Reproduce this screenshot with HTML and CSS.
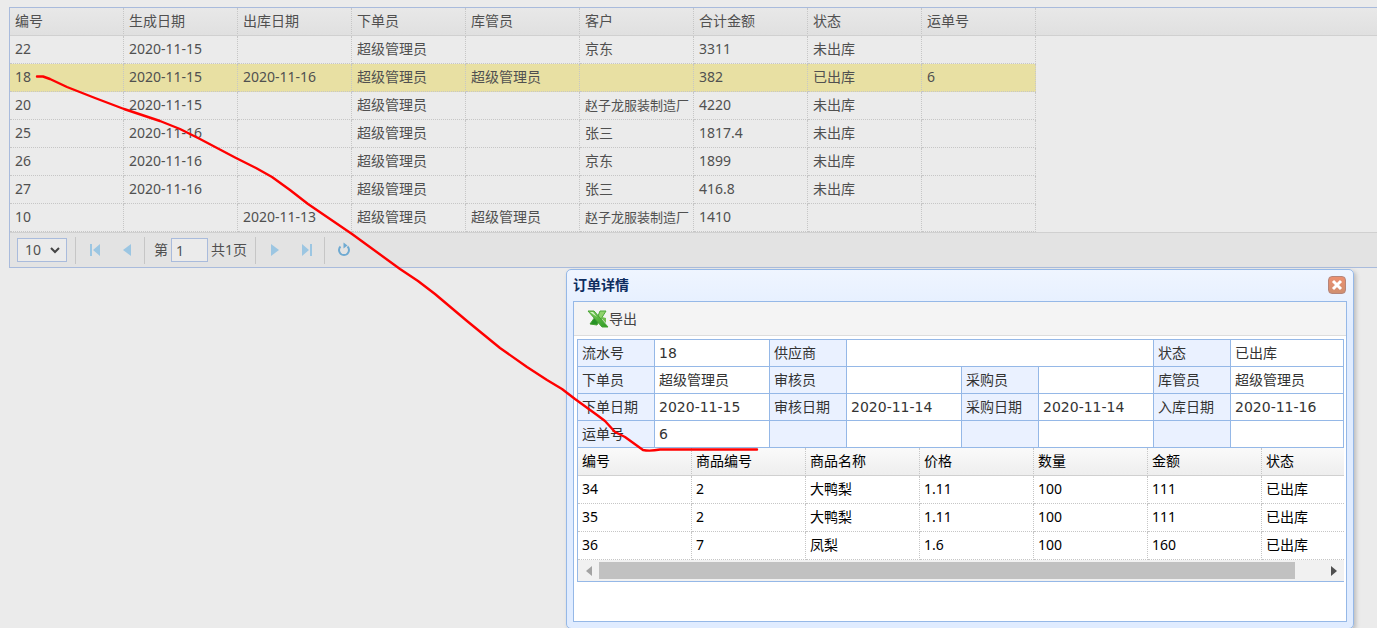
FILE: index.html
```html
<!DOCTYPE html>
<html lang="zh-CN">
<head>
<meta charset="utf-8">
<title>订单</title>
<link rel="stylesheet" href="styles.css">
</head>
<body>
<main class="grid">
  <div class="grid-view">
    <table class="data">
      <thead><tr><th>编号</th><th>生成日期</th><th>出库日期</th><th>下单员</th><th>库管员</th><th>客户</th><th>合计金额</th><th>状态</th><th>运单号</th></tr></thead>
      <tbody>
        <tr><td>22</td><td>2020-11-15</td><td></td><td>超级管理员</td><td></td><td>京东</td><td>3311</td><td>未出库</td><td></td></tr>
        <tr class="selected"><td>18</td><td>2020-11-15</td><td>2020-11-16</td><td>超级管理员</td><td>超级管理员</td><td></td><td>382</td><td>已出库</td><td>6</td></tr>
        <tr><td>20</td><td>2020-11-15</td><td></td><td>超级管理员</td><td></td><td class="long">赵子龙服装制造厂</td><td>4220</td><td>未出库</td><td></td></tr>
        <tr><td>25</td><td>2020-11-16</td><td></td><td>超级管理员</td><td></td><td>张三</td><td>1817.4</td><td>未出库</td><td></td></tr>
        <tr><td>26</td><td>2020-11-16</td><td></td><td>超级管理员</td><td></td><td>京东</td><td>1899</td><td>未出库</td><td></td></tr>
        <tr><td>27</td><td>2020-11-16</td><td></td><td>超级管理员</td><td></td><td>张三</td><td>416.8</td><td>未出库</td><td></td></tr>
        <tr><td>10</td><td></td><td>2020-11-13</td><td>超级管理员</td><td>超级管理员</td><td class="long">赵子龙服装制造厂</td><td>1410</td><td></td><td></td></tr>
      </tbody>
    </table>
  </div>
  <nav class="pager" aria-label="分页">
    <span class="size-wrap">
      <select class="size" aria-label="每页条数"><option>10</option></select>
      <svg class="chevron" viewBox="0 0 10 6" aria-hidden="true"><path d="M1 1l4 4 4-4"/></svg>
    </span>
    <span class="sep"></span>
    <button class="nav" type="button" aria-label="首页"><svg viewBox="0 0 16 16"><path d="M3 2h2v12H3zM13 2v12L6 8z"/></svg></button>
    <button class="nav" type="button" aria-label="上一页"><svg viewBox="0 0 16 16"><path d="M12 2v12L4 8z"/></svg></button>
    <span class="sep"></span>
    <label class="page">第<input type="text" value="1"></label>
    <span class="total">共1页</span>
    <span class="sep"></span>
    <button class="nav" type="button" aria-label="下一页"><svg viewBox="0 0 16 16"><path d="M4 2v12l8-6z"/></svg></button>
    <button class="nav" type="button" aria-label="末页"><svg viewBox="0 0 16 16"><path d="M3 2v12l7-6zM11 2h2v12h-2z"/></svg></button>
    <span class="sep"></span>
    <button class="nav" type="button" aria-label="刷新"><svg viewBox="0 0 16 16"><path class="ring" d="M4.500 4.500A5 5 0 1 0 11.500 4.500"/><path class="tip" d="M7.500 .5v6l4-3z"/></svg></button>
  </nav>
</main>

<section class="dialog" role="dialog" aria-labelledby="dialog-title">
  <header class="dialog-head">
    <h1 id="dialog-title">订单详情</h1>
    <button class="close" type="button" aria-label="关闭"><svg viewBox="0 0 16 16"><path d="M4 4l8 8M12 4l-8 8"/></svg></button>
  </header>
  <div class="dialog-body">
    <div class="toolbar">
      <button class="export" type="button">
        <svg viewBox="0 0 22 20" aria-hidden="true">
          <defs><linearGradient id="leaf" x1="0" y1="0" x2="1" y2="1"><stop offset="0" stop-color="#7fd05c"/><stop offset="1" stop-color="#2d9a22"/></linearGradient></defs>
          <path d="M13 2h6l-5 8-3-3z" fill="#8fd36c" stroke="#4fa83c"/>
          <path d="M3 15l5-7 4 4-2 4z" fill="#279326" stroke="#43a12f"/>
          <path d="M15 8l4 1v5l-4-4z" fill="#6fbd4d"/>
          <path d="M1 2h6l14 16h-6z" fill="url(#leaf)" stroke="#48a235"/>
          <path d="M3 3h3l4 5z" fill="#d6f3c8"/>
        </svg><span>导出</span>
      </button>
    </div>
    <div class="content">
      <table class="form">
        <colgroup><col class="k"><col class="v"><col class="k"><col class="v"><col class="k"><col class="v"><col class="k"><col></colgroup>
        <tbody>
          <tr><th>流水号</th><td>18</td><th>供应商</th><td colspan="3"></td><th>状态</th><td>已出库</td></tr>
          <tr><th>下单员</th><td>超级管理员</td><th>审核员</th><td></td><th>采购员</th><td></td><th>库管员</th><td>超级管理员</td></tr>
          <tr><th>下单日期</th><td>2020-11-15</td><th>审核日期</th><td>2020-11-14</td><th>采购日期</th><td>2020-11-14</td><th>入库日期</th><td>2020-11-16</td></tr>
          <tr><th>运单号</th><td>6</td><th></th><td></td><th></th><td></td><th></th><td></td></tr>
        </tbody>
      </table>
      <div class="items">
        <table class="data">
          <thead><tr><th>编号</th><th>商品编号</th><th>商品名称</th><th>价格</th><th>数量</th><th>金额</th><th>状态</th></tr></thead>
          <tbody>
            <tr><td>34</td><td>2</td><td>大鸭梨</td><td>1.11</td><td>100</td><td>111</td><td>已出库</td></tr>
            <tr><td>35</td><td>2</td><td>大鸭梨</td><td>1.11</td><td>100</td><td>111</td><td>已出库</td></tr>
            <tr><td>36</td><td>7</td><td>凤梨</td><td>1.6</td><td>100</td><td>160</td><td>已出库</td></tr>
          </tbody>
        </table>
        <div class="scrollbar">
          <svg class="arrow" viewBox="0 0 6 10" aria-hidden="true"><path d="M6 0v10L0 5z" fill="#a3a3a3"/></svg>
          <div class="track"><div class="thumb"></div></div>
          <svg class="arrow" viewBox="0 0 6 10" aria-hidden="true"><path d="M0 0v10l6-5z" fill="#505050"/></svg>
        </div>
      </div>
    </div>
  </div>
</section>

<svg class="pen" viewBox="0 0 1377 628" aria-hidden="true"><path d="M37 76.500L43 76.500L50 79L67 87L95 98L124 109L142 115L160 121L180 129L200 139L236 158L256 168L272 177L290 190L308 204L352 234L400 269L418 281L435 294L467 321L500 348L527 367L547 380L562 389L575 399L597 415L605 421L615 432L625 437L643 450Q650 451.500 660 449.500L757 449.500"/></svg>
</body>
</html>
```
FILE: styles.css
```css
* { box-sizing: border-box; }

body {
  margin: 0;
  padding: 7px 0 0 9px;
  min-height: 100vh;
  overflow: hidden;
  background: #ebebeb;
  color: #505050;
  font: 14px/20px "Noto Sans", "Noto Sans CJK SC", sans-serif;
}

button, input, select { font: inherit; color: inherit; margin: 0; }
button { padding: 0; border: 0; background: none; }

.grid { border: 1px solid #a9bbdc; border-right: 0; }
.grid-view { background: linear-gradient(#e8e8e8, #e0e0e0) top / 100% 27px no-repeat; position: relative; }
.grid-view::after { content: ""; position: absolute; left: 0; right: 0; top: 27px; border-top: 1px solid #d0d0d0; }

.data { table-layout: fixed; border-collapse: separate; border-spacing: 0; width: 1026px; }
.data th, .data td {
  height: 28px;
  padding: 0 0 2px 5px;
  border: 0 dotted #c6c6c6;
  border-width: 0 1px 1px 0;
  font-weight: normal;
  text-align: left;
  white-space: nowrap;
  overflow: hidden;
  line-height: 20px;
}
.data th { border-bottom: 1px solid #d0d0d0; }
.data .selected td { background: #e8e0a3; }
.data .long { font-size: 13px; }

.pager {
  display: flex;
  align-items: center;
  height: 35px;
  padding-left: 7px;
  border-top: 1px solid #d0d0d0;
  background: #e3e3e3;
}
.size-wrap { position: relative; width: 50px; height: 24px; }
.size {
  appearance: none;
  width: 100%;
  height: 100%;
  padding: 0 0 0 7px;
  border: 1px solid #a9bbdc;
  border-radius: 0;
  background: #ebebeb;
  line-height: 20px;
}
.chevron { position: absolute; right: 7px; top: 9px; width: 10px; height: 6px; fill: none; stroke: #444; stroke-width: 2; pointer-events: none; overflow: visible; }
.sep { width: 1px; height: 27px; margin: 0 3px 0 8px; background: #c6c6c6; }
.nav { display: grid; place-items: center; width: 32px; height: 24px; }
.nav svg { width: 16px; height: 16px; fill: #9cc6e2; }
.nav .ring { fill: none; stroke: #6faad2; stroke-width: 2; }
.nav .tip { fill: #6faad2; }
.nav + .sep { margin-left: 1px; }
.page { display: flex; align-items: center; gap: 3px; margin-left: 6px; }
.page input { width: 37px; height: 24px; padding: 0 4px; border: 1px solid #a9bbdc; background: #ebebeb; }
.total { margin-left: 3px; }

.dialog {
  position: absolute;
  left: 566px;
  top: 269px;
  width: 788px;
  padding: 0 6px 6px;
  border: 1px solid #95b8e7;
  border-radius: 5px;
  background: linear-gradient(#eff5ff, #e0ecff 60px);
  box-shadow: 2px 2px 4px #bbb;
  color: #333;
}
.dialog-head { display: flex; align-items: center; justify-content: space-between; height: 31px; padding: 0 1px 1px 0; }
.dialog-head h1 { margin: 0; color: #0e2d5f; font-size: 14px; line-height: 20px; font-weight: bold; }
.close {
  width: 18px;
  height: 18px;
  border: 1px solid #b5857a;
  border-radius: 4px;
  background: linear-gradient(#ec9070, #d08f70);
}
.close svg { display: block; width: 16px; height: 16px; fill: none; stroke: #fff; stroke-width: 3; }

.dialog-body { height: 321px; border: 1px solid #95b8e7; background: #fff; }
.toolbar { display: flex; align-items: center; height: 34px; padding-left: 13px; border-bottom: 1px solid #ddd; background: #f4f4f4; }
.export { display: flex; align-items: center; color: #444; }
.export svg { width: 22px; height: 20px; }
.content { padding: 3px 2px 0 3px; }

.form { width: 100%; table-layout: fixed; border-collapse: collapse; font-family: "DejaVu Sans", "Noto Sans CJK SC", sans-serif; }
.form .k { width: 77px; }
.form .v { width: 115px; }
.form th, .form td { height: 27px; padding: 0 4px; border: 1px solid #95b8e7; font-weight: normal; text-align: left; line-height: 20px; white-space: nowrap; }
.form th { background: #eaf1ff; }

.items { overflow: hidden; border: solid #95b8e7; border-width: 0 0 1px 1px; color: #000; }
.items .data { width: 798px; }
.items .data th, .items .data td { padding-left: 4px; }
.items .data th { background: linear-gradient(#fafafa, #eee); }
.scrollbar { display: flex; align-items: center; height: 21px; padding: 0 7px 0 8px; background: #f1f1f1; }
.arrow { width: 6px; height: 10px; }
.track { flex: 1; margin: 0 7px; }
.thumb { width: 96%; height: 17px; background: #c1c1c1; }

.pen { position: absolute; left: 0; top: 0; width: 1377px; height: 628px; fill: none; stroke: #f00; stroke-width: 2.4; stroke-linejoin: round; stroke-linecap: round; pointer-events: none; }
```
